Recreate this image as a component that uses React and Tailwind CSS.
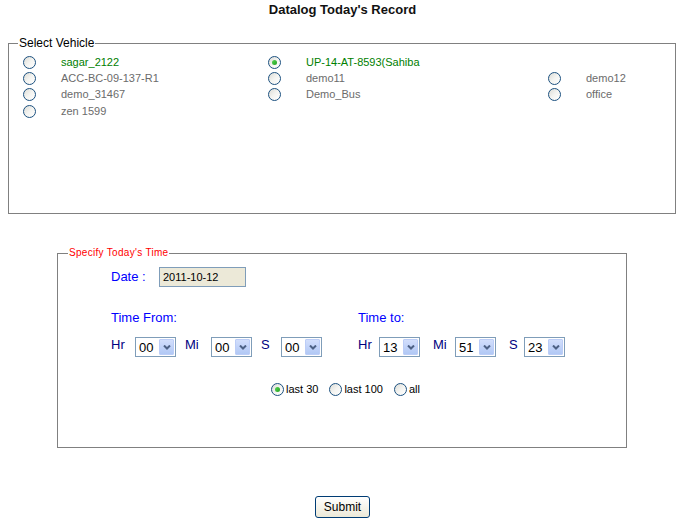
import React, { useState } from 'react';

const vehicles = [
  [
    { name: 'sagar_2122', green: true },
    { name: 'UP-14-AT-8593(Sahiba', green: true },
    null,
  ],
  [{ name: 'ACC-BC-09-137-R1' }, { name: 'demo11' }, { name: 'demo12' }],
  [{ name: 'demo_31467' }, { name: 'Demo_Bus' }, { name: 'office' }],
  [{ name: 'zen 1599' }, null, null],
];

function Radio({ checked, onClick }) {
  return (
    <span
      onClick={onClick}
      className="relative inline-flex w-[13px] h-[13px] shrink-0 items-center justify-center rounded-full border border-[#1c5180] bg-gradient-to-br from-[#dcdcd6] via-[#f4f4f1] to-[#ffffff] cursor-pointer"
    >
      {checked && (
        <span className="w-[5px] h-[5px] rounded-full bg-gradient-to-br from-[#55d551] to-[#21a121]" />
      )}
    </span>
  );
}

function Select({ value }) {
  return (
    <div className="flex w-[41px] h-[20px] border border-[#7f9db9] bg-white items-center">
      <span className="flex-1 pl-[3px] text-[13px] leading-none text-black">{value}</span>
      <span className="flex items-center justify-center w-[15px] h-[16px] mr-[1px] rounded-[1px] bg-gradient-to-b from-[#d2defc] to-[#b1c8f5] border border-[#bccdf7]">
        <svg width="8" height="5" viewBox="0 0 8 5">
          <path d="M1 0.5 L4 3.5 L7 0.5" stroke="#4d6185" strokeWidth="2" fill="none" />
        </svg>
      </span>
    </div>
  );
}

export default function App() {
  const [vehicle, setVehicle] = useState('UP-14-AT-8593(Sahiba');
  const [range, setRange] = useState('last30');

  const label = 'text-[13px] text-[#000080] -mt-[4px]';

  return (
    <div className="w-[685px] h-[523px] bg-white font-['Liberation_Sans',Arial,sans-serif] text-black overflow-hidden">
      <h1 className="pt-[2px] text-center text-[13px] font-bold leading-[15px] text-[#111]">
        Datalog Today's Record
      </h1>

      <fieldset className="mt-[19px] ml-[8px] w-[668px] h-[178px] border border-[#808080] pt-[4px]">
        <legend className="ml-[9px] px-[1px] text-[12px] leading-[14px] text-black">Select Vehicle</legend>
        <div className="grid grid-cols-[245px_280px_1fr] pl-[14px]">
          {vehicles.map((row, i) =>
            row.map((v, j) => (
              <div key={i + '-' + j} className="flex items-center h-[16.3px]">
                {v && (
                  <>
                    <Radio checked={vehicle === v.name} onClick={() => setVehicle(v.name)} />
                    <span
                      className={`ml-[25px] text-[11px] leading-none ${v.green ? 'text-[#008000]' : 'text-[#6b6b6b]'}`}
                    >
                      {v.name}
                    </span>
                  </>
                )}
              </div>
            ))
          )}
        </div>
      </fieldset>

      <fieldset className="mt-[33px] ml-[57px] w-[570px] h-[201px] border border-[#808080]">
        <legend className="ml-[10px] px-[1px] text-[10px] leading-[12px] text-[#ff0000] tracking-[0.3px]">
          Specify Today's Time
        </legend>
        <div className="pl-[53px]">
          <div className="flex items-center mt-[8px]">
            <span className="w-[48px] text-[13px] text-[#0000ff]">Date :</span>
            <div className="w-[87px] h-[20px] border border-[#7f9db9] bg-[#ece9d8] flex items-center pl-[3px] text-[11px]">
              2011-10-12
            </div>
          </div>
          <div className="flex mt-[23px]">
            <div className="w-[247px]">
              <div className="text-[13px] text-[#0000ff] leading-[15px]">Time From:</div>
              <div className="flex items-center mt-[12px]">
                <span className={`w-[24px] ${label}`}>Hr</span>
                <Select value="00" />
                <span className={`w-[26px] ml-[9px] ${label}`}>Mi</span>
                <Select value="00" />
                <span className={`w-[20px] ml-[9px] ${label}`}>S</span>
                <Select value="00" />
              </div>
            </div>
            <div>
              <div className="text-[13px] text-[#0000ff] leading-[15px]">Time to:</div>
              <div className="flex items-center mt-[12px]">
                <span className={`w-[21px] ${label}`}>Hr</span>
                <Select value="13" />
                <span className={`w-[22px] ml-[13px] ${label}`}>Mi</span>
                <Select value="51" />
                <span className={`w-[15px] ml-[13px] ${label}`}>S</span>
                <Select value="23" />
              </div>
            </div>
          </div>
          <div className="flex items-center mt-[26px] ml-[160px] text-[11px]">
            <Radio checked={range === 'last30'} onClick={() => setRange('last30')} />
            <span className="ml-[2px] mr-[11px] leading-none">last 30</span>
            <Radio checked={range === 'last100'} onClick={() => setRange('last100')} />
            <span className="ml-[2px] mr-[11px] leading-none">last 100</span>
            <Radio checked={range === 'all'} onClick={() => setRange('all')} />
            <span className="ml-[2px] leading-none">all</span>
          </div>
        </div>
      </fieldset>

      <div className="flex justify-center mt-[48px]">
        <button className="w-[55px] h-[22px] rounded-[3px] border border-[#003c74] bg-gradient-to-b from-[#ffffff] to-[#ece9d8] text-[12px] leading-none text-black">
          Submit
        </button>
      </div>
    </div>
  );
}
